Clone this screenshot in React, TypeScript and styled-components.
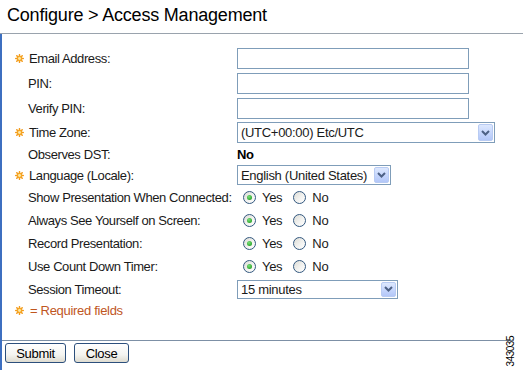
import React from 'react'
import styled, { createGlobalStyle } from 'styled-components'

const GlobalStyle = createGlobalStyle`
  html, body {
    margin: 0;
    padding: 0;
    background: #fff;
  }
  body {
    font-family: 'Liberation Sans', Arial, sans-serif;
    font-size: 13px;
    letter-spacing: -0.3px;
    color: #1a1a1a;
  }
`

const Page = styled.div`
  position: relative;
  width: 523px;
  height: 371px;
  overflow: hidden;
`

const Title = styled.h1`
  margin: 0;
  height: 34px;
  padding: 5px 0 0 7px;
  box-sizing: border-box;
  font-size: 18px;
  font-weight: normal;
  letter-spacing: -0.2px;
  color: #000;
  border-bottom: 1px solid #9aa3ad;
`

const Body = styled.div`
  border-left: 2px solid #3d6fc0;
  height: 336px;
  box-sizing: border-box;
`

const Form = styled.div`
  padding: 12px 0 0 13px;
  height: 306px;
  box-sizing: border-box;
`

const Row = styled.div<{ $h: number }>`
  display: grid;
  grid-template-columns: 222px 1fr;
  align-items: center;
  height: ${(p) => p.$h}px;
`

const Label = styled.div<{ $required?: boolean }>`
  display: flex;
  align-items: center;
  gap: 5px;
  padding-left: ${(p) => (p.$required ? 0 : 13)}px;
  white-space: nowrap;
  letter-spacing: -0.4px;
`

const Field = styled.div`
  display: flex;
  align-items: center;
`

const TextBox = styled.div`
  width: 232px;
  height: 21px;
  box-sizing: border-box;
  border: 1px solid #7f9db9;
  background: #fff;
`

const Select = styled.div<{ $w: number; $h: number }>`
  display: flex;
  align-items: center;
  justify-content: space-between;
  width: ${(p) => p.$w}px;
  height: ${(p) => p.$h}px;
  box-sizing: border-box;
  border: 1px solid #7f9db9;
  background: #fff;
  padding: 1px 1px 1px 3px;
`

const SelectText = styled.span`
  white-space: nowrap;
`

const ArrowButton = styled.span`
  display: flex;
  align-items: center;
  justify-content: center;
  width: 15px;
  height: 100%;
  box-sizing: border-box;
  border: 1px solid #b8cbf3;
  border-radius: 2px;
  background: linear-gradient(180deg, #dde8fe 0%, #c3d4fc 60%, #b3c7f8 100%);
`

const Value = styled.span`
  font-weight: bold;
  color: #000;
`

const RadioGroup = styled.div`
  display: flex;
  align-items: center;
  padding-left: 6px;
`

const RadioOption = styled.label`
  display: flex;
  align-items: center;
  gap: 6px;
  margin-right: 11px;
`

const RadioCircle = styled.span<{ $on?: boolean }>`
  position: relative;
  width: 13px;
  height: 13px;
  box-sizing: border-box;
  border-radius: 50%;
  border: 1px solid #33587f;
  background: linear-gradient(135deg, #dcdcd6 0%, #f4f4f2 60%, #ffffff 100%);

  &::after {
    content: '';
    display: ${(p) => (p.$on ? 'block' : 'none')};
    position: absolute;
    left: 3px;
    top: 3px;
    width: 5px;
    height: 5px;
    border-radius: 50%;
    background: radial-gradient(circle at 40% 35%, #7be07b 0%, #2ea82e 70%, #1f8a1f 100%);
  }
`

const Required = styled.div`
  display: flex;
  align-items: center;
  gap: 6px;
  height: 20px;
  color: #c0561e;
`

const Footer = styled.div`
  border-top: 1px solid #7d90a6;
  width: 509px;
  display: flex;
  gap: 8px;
  padding: 2px 0 0 3px;
`

const Button = styled.button<{ $w: number }>`
  width: ${(p) => p.$w}px;
  height: 20px;
  padding: 0;
  font-family: 'Liberation Sans', Arial, sans-serif;
  font-size: 13px;
  letter-spacing: -0.3px;
  color: #000;
  border: 1px solid #2c4f7c;
  border-radius: 3px;
  background: linear-gradient(180deg, #ffffff 0%, #f4f4f0 60%, #dedbd0 100%);
`

const FigureId = styled.span`
  position: absolute;
  right: 7px;
  bottom: 5px;
  writing-mode: vertical-rl;
  transform: rotate(180deg);
  font-size: 10px;
  color: #000;
  letter-spacing: -0.5px;
`

const Star: React.FC = () => (
  <svg width="9" height="9" viewBox="0 0 10 10">
    <g stroke="#f39a1b" strokeWidth="1.7" strokeLinecap="round">
      <line x1="5" y1="0.8" x2="5" y2="9.2" />
      <line x1="0.8" y1="5" x2="9.2" y2="5" />
      <line x1="2" y1="2" x2="8" y2="8" />
      <line x1="8" y1="2" x2="2" y2="8" />
    </g>
    <circle cx="5" cy="5" r="3" fill="#f5a524" />
    <circle cx="5" cy="5" r="1.6" fill="#fde9a6" />
  </svg>
)

const Chevron: React.FC = () => (
  <svg width="9" height="6" viewBox="0 0 9 6">
    <path d="M1 1 L4.5 4.5 L8 1" fill="none" stroke="#4d6185" strokeWidth="2" />
  </svg>
)

const YesNo: React.FC = () => (
  <RadioGroup>
    <RadioOption>
      <RadioCircle $on />
      Yes
    </RadioOption>
    <RadioOption>
      <RadioCircle />
      No
    </RadioOption>
  </RadioGroup>
)

const DropDown: React.FC<{ w: number; h: number; text: string }> = ({ w, h, text }) => (
  <Select $w={w} $h={h}>
    <SelectText>{text}</SelectText>
    <ArrowButton>
      <Chevron />
    </ArrowButton>
  </Select>
)

const App: React.FC = () => {
  return (
    <Page>
      <GlobalStyle />
      <Title>Configure &gt; Access Management</Title>
      <Body>
        <Form>
          <Row $h={25}>
            <Label $required>
              <Star />
              Email Address:
            </Label>
            <Field>
              <TextBox />
            </Field>
          </Row>
          <Row $h={25}>
            <Label>PIN:</Label>
            <Field>
              <TextBox />
            </Field>
          </Row>
          <Row $h={25}>
            <Label>Verify PIN:</Label>
            <Field>
              <TextBox />
            </Field>
          </Row>
          <Row $h={23}>
            <Label $required>
              <Star />
              Time Zone:
            </Label>
            <Field>
              <DropDown w={258} h={21} text="(UTC+00:00) Etc/UTC" />
            </Field>
          </Row>
          <Row $h={20}>
            <Label>Observes DST:</Label>
            <Field>
              <Value>No</Value>
            </Field>
          </Row>
          <Row $h={22}>
            <Label $required>
              <Star />
              Language (Locale):
            </Label>
            <Field>
              <DropDown w={154} h={20} text="English (United States)" />
            </Field>
          </Row>
          <Row $h={23}>
            <Label>Show Presentation When Connected:</Label>
            <Field>
              <YesNo />
            </Field>
          </Row>
          <Row $h={23}>
            <Label>Always See Yourself on Screen:</Label>
            <Field>
              <YesNo />
            </Field>
          </Row>
          <Row $h={23}>
            <Label>Record Presentation:</Label>
            <Field>
              <YesNo />
            </Field>
          </Row>
          <Row $h={23}>
            <Label>Use Count Down Timer:</Label>
            <Field>
              <YesNo />
            </Field>
          </Row>
          <Row $h={22}>
            <Label>Session Timeout:</Label>
            <Field>
              <DropDown w={161} h={19} text="15 minutes" />
            </Field>
          </Row>
          <Required>
            <Star />= Required fields
          </Required>
        </Form>
        <Footer>
          <Button $w={61}>Submit</Button>
          <Button $w={55}>Close</Button>
        </Footer>
      </Body>
      <FigureId>343035</FigureId>
    </Page>
  )
}

export default App
